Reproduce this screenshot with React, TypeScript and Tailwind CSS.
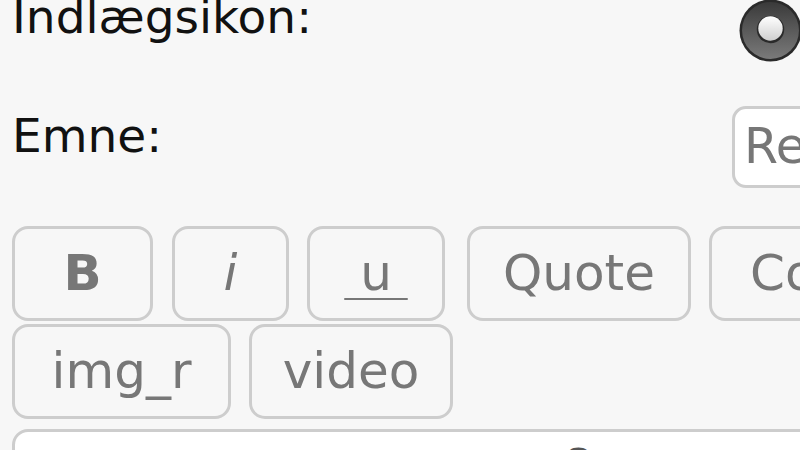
import React from "react";

const btn =
  "shrink-0 border-[3px] border-[#cdcdcd] rounded-[16px] bg-[#f7f7f7] text-[#777] text-[50px] leading-[56px] pt-[16px] pb-[17px] whitespace-pre text-center";

function Radio() {
  return (
    <svg width="63" height="63" viewBox="0 0 62 62">
      <defs>
        <linearGradient id="outer" x1="0" y1="0" x2="0" y2="1">
          <stop offset="0" stopColor="#3a3a3a" />
          <stop offset="0.5" stopColor="#5a5a5a" />
          <stop offset="1" stopColor="#7a7a7a" />
        </linearGradient>
        <linearGradient id="inner" x1="0" y1="0" x2="0" y2="1">
          <stop offset="0" stopColor="#ffffff" />
          <stop offset="1" stopColor="#cfcfcf" />
        </linearGradient>
      </defs>
      <circle cx="31" cy="31" r="30.5" fill="#2a2a2a" />
      <circle cx="31" cy="31" r="28" fill="url(#outer)" />
      <circle cx="31" cy="30" r="13.5" fill="#2a2a2a" />
      <circle cx="31" cy="29" r="12" fill="url(#inner)" />
    </svg>
  );
}

export default function App() {
  return (
    <div
      className="w-[800px] h-[450px] overflow-hidden bg-[#f7f7f7]"
      style={{ fontFamily: "'DejaVu Sans', Verdana, sans-serif" }}
    >
      <div className="pl-[12px] w-[1300px]">
        <div className="flex h-[106px]">
          <div className="w-[720px] -mt-[11px] text-[47px] leading-[56px] text-[#111]">
            Indlægsikon:
          </div>
          <div className="ml-[7px] -mt-[1px]">
            <Radio />
          </div>
        </div>
        <div className="flex">
          <div className="w-[720px] mt-[2px] text-[47px] leading-[56px] text-[#111]">
            Emne:
          </div>
          <div className="w-[320px] h-[82px] border-[3px] border-[#cdcdcd] rounded-[14px] bg-white pl-[9px] py-[10px] text-[49px] leading-[56px] text-[#777] whitespace-nowrap">
            Re: Indlæg
          </div>
        </div>
        <div className="mt-[38px] flex">
          <div className={btn + " font-bold w-[141px]"}>{" B "}</div>
          <div className={btn + " italic w-[117px] ml-[19px]"}>{" i "}</div>
          <div className={btn + " w-[138px] ml-[18px]"}>
            <span className="underline decoration-[2px] underline-offset-[8px]">{" u "}</span>
          </div>
          <div className={btn + " w-[224px] ml-[22px]"}>Quote</div>
          <div className={btn + " w-[210px] ml-[18px]"}>Code</div>
          <div className={btn + " w-[170px] ml-[18px]"}>List</div>
        </div>
        <div className="mt-[3px] flex">
          <div className={btn + " w-[219px]"}>img_r</div>
          <div className={btn + " w-[204px] ml-[18px]"}>video</div>
        </div>
        <div className="mt-[10px] w-[1100px] h-[200px] border-[3px] border-[#cdcdcd] rounded-[16px] bg-white relative">
          <div className="absolute left-[548px] top-[6px] text-[48px] leading-[56px] text-[#555]">8</div>
        </div>
      </div>
    </div>
  );
}
